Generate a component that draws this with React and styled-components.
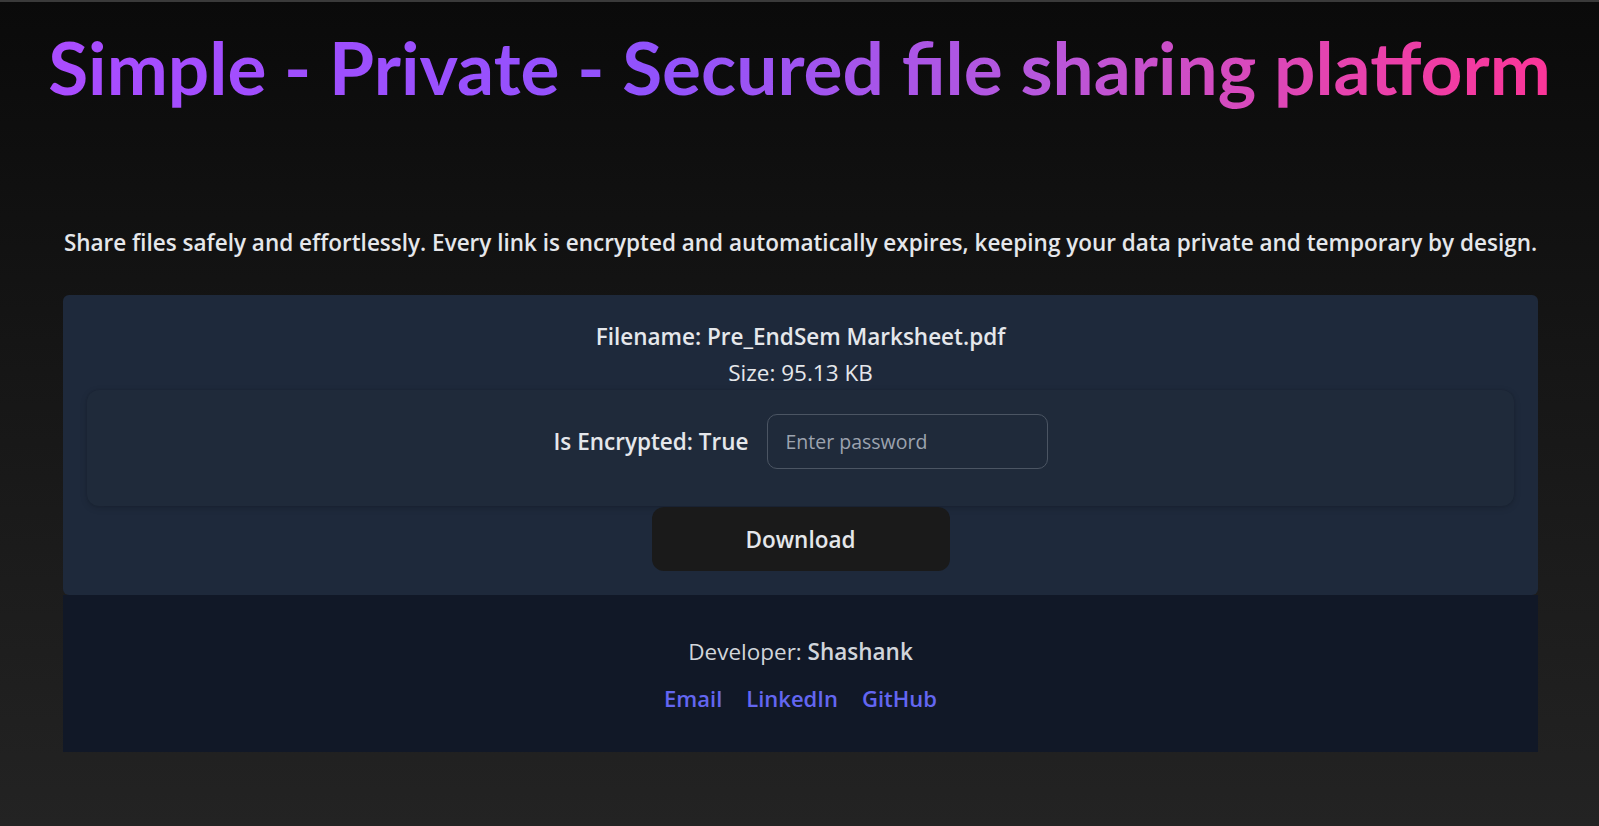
import React from "react";
import styled, { createGlobalStyle } from "styled-components";

const GlobalStyle = createGlobalStyle`
  html, body {
    margin: 0;
    padding: 0;
  }
  body {
    min-height: 100vh;
    background: linear-gradient(to bottom, #0a0a0a 0%, #161616 45%, #232323 100%);
    font-family: "Open Sans", "Noto Sans", sans-serif;
    color: #e5e7eb;
  }
  * { box-sizing: border-box; }
`;

const Page = styled.div`
  min-height: 100vh;
  border-top: 2px solid #3a3a3a;
  padding: 21px 0 40px;
  display: flex;
  flex-direction: column;
  align-items: center;
`;

const Title = styled.h1`
  margin: 0;
  width: fit-content;
  font-family: "Lato", "Open Sans", sans-serif;
  font-weight: 700;
  font-size: 73px;
  line-height: 88px;
  white-space: nowrap;
  background: linear-gradient(
    90deg,
    #aa4cff 0%,
    #9152fc 40%,
    #b757dc 66%,
    #e444b0 85%,
    #fb3598 100%
  );
  -webkit-background-clip: text;
  background-clip: text;
  color: transparent;
`;

const Main = styled.main`
  align-self: stretch;
  margin: 116px 61px 0 63px;
  display: flex;
  flex-direction: column;
  align-items: stretch;
`;

const Tagline = styled.p`
  margin: 0 0 36px;
  text-align: center;
  font-weight: 600;
  font-size: 22.5px;
  line-height: 32px;
  color: #e5e7eb;
  white-space: nowrap;
`;

const Card = styled.section`
  background: #1e293b;
  border-radius: 6px;
  padding: 24px 24px 24px;
  display: flex;
  flex-direction: column;
  align-items: center;
`;

const InfoLine = styled.div`
  font-size: 22.5px;
  line-height: 36px;
  font-weight: ${(p) => (p.$strong ? 600 : 400)};
  color: #e5e7eb;
`;

const SecureBox = styled.div`
  align-self: stretch;
  margin-top: -1px;
  padding: 24px 24px 37px;
  border-radius: 12px;
  background: #1f2a3a;
  box-shadow: 0 2px 7px rgba(0, 0, 0, 0.16), 0 0 2px rgba(0, 0, 0, 0.12);
  display: flex;
  justify-content: center;
  align-items: center;
  gap: 18px;
`;

const Label = styled.span`
  font-size: 22.5px;
  line-height: 36px;
  font-weight: 600;
  color: #e5e7eb;
`;

const PasswordInput = styled.input`
  width: 281px;
  height: 55px;
  padding: 0 18px;
  border: 1px solid #4b5563;
  border-radius: 10px;
  background: transparent;
  color: #e5e7eb;
  font-family: "Open Sans", "Noto Sans", sans-serif;
  font-size: 19.5px;
  outline: none;
  &::placeholder {
    color: #9ca3af;
  }
`;

const DownloadButton = styled.button`
  margin-top: 1px;
  width: 298px;
  height: 64px;
  border: none;
  border-radius: 12px;
  background: #1a1a1a;
  color: #e5e7eb;
  font-family: "Open Sans", "Noto Sans", sans-serif;
  font-size: 22.5px;
  font-weight: 600;
  cursor: pointer;
`;

const Footer = styled.footer`
  background: #111827;
  padding: 39px 0 36px;
  display: flex;
  flex-direction: column;
  align-items: center;
  gap: 10px;
`;

const DevLine = styled.div`
  font-size: 22.5px;
  line-height: 36px;
  color: #d1d5db;
  b {
    font-weight: 600;
  }
`;

const Links = styled.nav`
  display: flex;
  gap: 24px;
`;

const FooterLink = styled.a`
  font-size: 22px;
  line-height: 36px;
  font-weight: 600;
  color: #6366f1;
  text-decoration: none;
`;

export default function App() {
  return (
    <>
      <GlobalStyle />
      <Page>
        <Title>Simple - Private - Secured file sharing platform</Title>
        <Main>
          <Tagline>
            Share files safely and effortlessly. Every link is encrypted and automatically expires,
            keeping your data private and temporary by design.
          </Tagline>
          <Card>
            <InfoLine $strong>Filename: Pre_EndSem Marksheet.pdf</InfoLine>
            <InfoLine>Size: 95.13 KB</InfoLine>
            <SecureBox>
              <Label>Is Encrypted: True</Label>
              <PasswordInput type="password" placeholder="Enter password" />
            </SecureBox>
            <DownloadButton>Download</DownloadButton>
          </Card>
          <Footer>
            <DevLine>
              Developer: <b>Shashank</b>
            </DevLine>
            <Links>
              <FooterLink href="#">Email</FooterLink>
              <FooterLink href="#">LinkedIn</FooterLink>
              <FooterLink href="#">GitHub</FooterLink>
            </Links>
          </Footer>
        </Main>
      </Page>
    </>
  );
}
